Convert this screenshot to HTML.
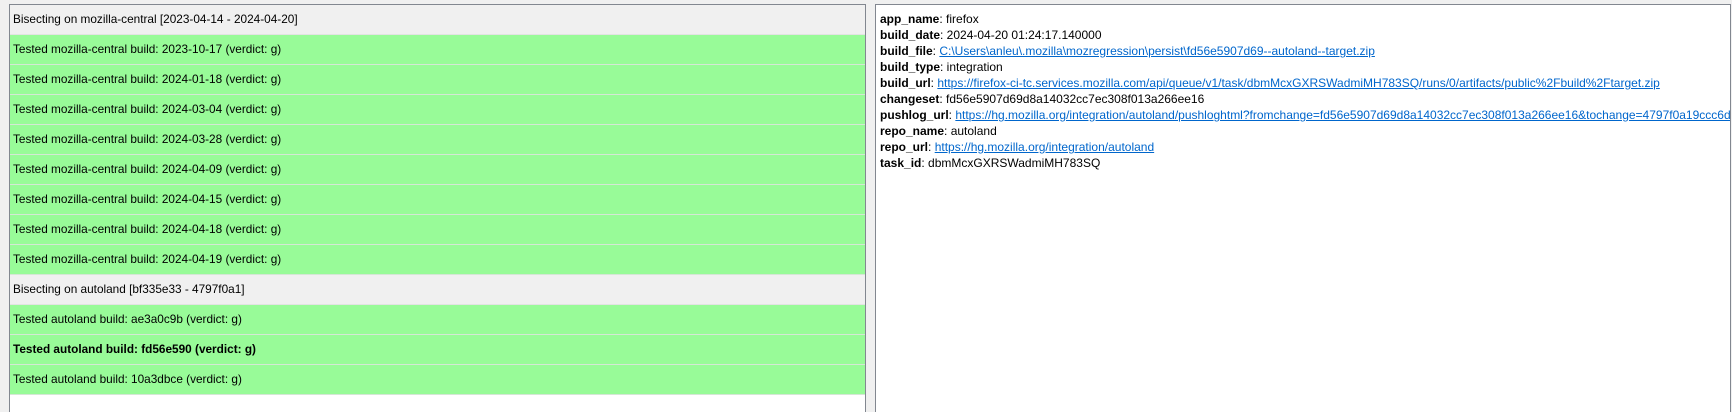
<!DOCTYPE html>
<html><head><meta charset="utf-8">
<style>
html,body{margin:0;padding:0;width:1732px;height:411px;overflow:hidden;background:#f0f0f0;font-family:"Liberation Sans",Arial,sans-serif;}
#left{position:absolute;left:9px;top:4px;width:855px;height:407px;border-left:1px solid #828790;border-top:1px solid #828790;border-right:1px solid #828790;background:#fff;}
.row{height:29px;border-bottom:1px solid #d5e7d5;background:#98fb98;font-size:11.8px;line-height:29px;padding-left:3px;color:#000;white-space:nowrap;}
.row.h{background:#f0f0f0;border-bottom:1px solid #e3e3e3;}
.row.b{font-weight:bold;}
#right{position:absolute;left:875px;top:4px;width:854px;height:407px;border-left:1px solid #828790;border-top:1px solid #828790;border-right:1px solid #828790;background:#fff;overflow:hidden;}
.info{padding:6px 0 0 4px;font-size:12px;line-height:16px;white-space:nowrap;color:#000;}
.info b{font-weight:bold;}
.info a{color:#0066cc;text-decoration:underline;}
</style></head><body>
<div id="left">
<div class="row h">Bisecting on mozilla-central [2023-04-14 - 2024-04-20]</div>
<div class="row">Tested mozilla-central build: 2023-10-17 (verdict: g)</div>
<div class="row">Tested mozilla-central build: 2024-01-18 (verdict: g)</div>
<div class="row">Tested mozilla-central build: 2024-03-04 (verdict: g)</div>
<div class="row">Tested mozilla-central build: 2024-03-28 (verdict: g)</div>
<div class="row">Tested mozilla-central build: 2024-04-09 (verdict: g)</div>
<div class="row">Tested mozilla-central build: 2024-04-15 (verdict: g)</div>
<div class="row">Tested mozilla-central build: 2024-04-18 (verdict: g)</div>
<div class="row">Tested mozilla-central build: 2024-04-19 (verdict: g)</div>
<div class="row h">Bisecting on autoland [bf335e33 - 4797f0a1]</div>
<div class="row">Tested autoland build: ae3a0c9b (verdict: g)</div>
<div class="row b">Tested autoland build: fd56e590 (verdict: g)</div>
<div class="row">Tested autoland build: 10a3dbce (verdict: g)</div>
</div>
<div id="right"><div class="info">
<div><b>app_name</b>: firefox</div>
<div><b>build_date</b>: 2024-04-20 01:24:17.140000</div>
<div><b>build_file</b>: <a>C:\Users\anleu\.mozilla\mozregression\persist\fd56e5907d69--autoland--target.zip</a></div>
<div><b>build_type</b>: integration</div>
<div><b>build_url</b>: <a>https://firefox-ci-tc.services.mozilla.com/api/queue/v1/task/dbmMcxGXRSWadmiMH783SQ/runs/0/artifacts/public%2Fbuild%2Ftarget.zip</a></div>
<div><b>changeset</b>: fd56e5907d69d8a14032cc7ec308f013a266ee16</div>
<div><b>pushlog_url</b>: <a>https://hg.mozilla.org/integration/autoland/pushloghtml?fromchange=fd56e5907d69d8a14032cc7ec308f013a266ee16&amp;tochange=4797f0a19ccc6dca1234567890</a></div>
<div><b>repo_name</b>: autoland</div>
<div><b>repo_url</b>: <a>https://hg.mozilla.org/integration/autoland</a></div>
<div><b>task_id</b>: dbmMcxGXRSWadmiMH783SQ</div>
</div></div>
</body></html>
